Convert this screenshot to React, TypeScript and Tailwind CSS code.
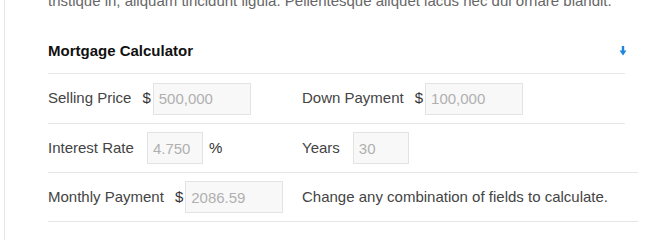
const rows = [
  {
    left: { label: "Selling Price", prefix: "$", value: "500,000", width: "w-[98px]" },
    right: { label: "Down Payment", prefix: "$", value: "100,000", width: "w-[98px]" },
  },
];

function Field({
  label,
  prefix,
  value,
  wide,
  suffix,
}: {
  label: string;
  prefix?: string;
  value: string;
  wide?: boolean;
  suffix?: string;
}) {
  return (
    <div className="flex items-center">
      <span className="text-[#444]">{label}</span>
      {prefix ? <span className="ml-[11px] text-[#333]">{prefix}</span> : null}
      <input
        readOnly
        placeholder={value}
        className={
          (prefix ? "ml-[2px] " : "ml-[13px] ") +
          (wide ? "w-[98px] " : "w-[56px] ") +
          "h-[32px] border border-[#e3e3e3] bg-[#f8f8f8] px-[5px] text-[15px] text-[#aaa] outline-none placeholder:text-[#b0b0b0]"
        }
      />
      {suffix ? <span className="ml-[6px] text-[#333]">{suffix}</span> : null}
    </div>
  );
}

function DownArrow() {
  return (
    <svg width="8" height="10" viewBox="0 0 8 10" className="-mr-[2px]">
      <rect x="2.8" y="0" width="2.4" height="5" fill="#1f86e0" />
      <path d="M0.5 4.5 H7.5 L4 9.5 Z" fill="#1f86e0" />
    </svg>
  );
}

export default function App() {
  return (
    <div className="h-[250px] w-[660px] overflow-hidden bg-white font-['Liberation_Sans',Arial,sans-serif] text-[15px]">
      <div className="ml-[4px] h-full border-l border-[#e4e4e4] pl-[43px]">
        <p className="-mt-[10px] leading-[22px] text-[#666] whitespace-nowrap">
          tristique in, aliquam tincidunt ligula. Pellentesque aliquet lacus nec dui ornare blandit.
        </p>

        {/* Heading */}
        <div className="mt-[29px] flex w-[577px] items-center justify-between border-b border-[#e6e6e6] pb-[12px]">
          <h2 className="text-[15px] font-bold leading-[20px] text-[#111]">Mortgage Calculator</h2>
          <DownArrow />
        </div>

        {/* Row 1 */}
        {rows.map((r) => (
          <div key={r.left.label} className="flex h-[50px] w-[577px] items-center border-b border-[#e6e6e6]">
            <div className="w-[254px]">
              <Field label={r.left.label} prefix={r.left.prefix} value={r.left.value} wide />
            </div>
            <Field label={r.right.label} prefix={r.right.prefix} value={r.right.value} wide />
          </div>
        ))}

        {/* Row 2 */}
        <div className="flex h-[49px] w-[590px] items-center border-b border-[#e6e6e6]">
          <div className="w-[254px]">
            <Field label="Interest Rate" value="4.750" suffix="%" />
          </div>
          <Field label="Years" value="30" />
        </div>

        {/* Row 3 */}
        <div className="flex h-[49px] w-[590px] items-center border-b border-[#e6e6e6]">
          <div className="w-[254px]">
            <Field label="Monthly Payment" prefix="$" value="2086.59" wide />
          </div>
          <span className="text-[#444]">Change any combination of fields to calculate.</span>
        </div>
      </div>
    </div>
  );
}
